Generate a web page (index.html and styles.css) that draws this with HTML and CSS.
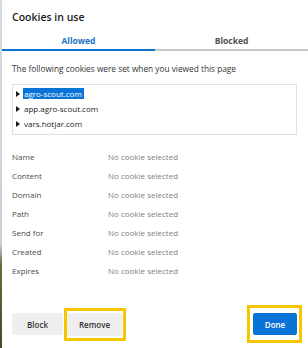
FILE: index.html
```html
<!DOCTYPE html>
<html lang="en">
<head>
    <meta charset="UTF-8">
    <meta name="viewport" content="width=device-width, initial-scale=1.0">
    <title>Cookies in use</title>
    <link rel="stylesheet" href="styles.css">
</head>
<body>

    <!-- cookie dialog -->
    <div class="dialog">

        <h1 class="title">Cookies in use</h1>

        <!-- tabs -->
        <div class="tabs">
            <div class="tab active">Allowed</div>
            <div class="tab">Blocked</div>
        </div>

        <p class="intro">The following cookies were set when you viewed this page</p>

        <!-- cookie tree -->
        <div class="tree">
            <div class="tree-item"><span class="arrow"></span><span class="site selected">agro-scout.com</span></div>
            <div class="tree-item"><span class="arrow"></span><span class="site">app.agro-scout.com</span></div>
            <div class="tree-item"><span class="arrow"></span><span class="site">vars.hotjar.com</span></div>
        </div>

        <!-- details -->
        <div class="details">
            <div class="row"><span class="label">Name</span><span class="value">No cookie selected</span></div>
            <div class="row"><span class="label">Content</span><span class="value">No cookie selected</span></div>
            <div class="row"><span class="label">Domain</span><span class="value">No cookie selected</span></div>
            <div class="row"><span class="label">Path</span><span class="value">No cookie selected</span></div>
            <div class="row"><span class="label">Send for</span><span class="value">No cookie selected</span></div>
            <div class="row"><span class="label">Created</span><span class="value">No cookie selected</span></div>
            <div class="row"><span class="label">Expires</span><span class="value">No cookie selected</span></div>
        </div>

        <!-- buttons -->
        <div class="footer">
            <button class="btn">Block</button>
            <span class="mark mark-remove"><button class="btn btn-remove">Remove</button></span>
            <span class="spacer"></span>
            <span class="mark mark-done"><button class="btn btn-primary">Done</button></span>
        </div>

    </div>

</body>
</html>
```

FILE: styles.css
```css
/* page */
body {
    margin: 0;
    width: 308px;
    height: 348px;
    overflow: hidden;
    font-family: 'Open Sans', 'Noto Sans', sans-serif;
    color: #333;
    background: linear-gradient(180deg, #d3dbe5 0%, #c9d0d8 70%, #6e6b3b 76%, #4a4726 100%);
}

/* dialog */
.dialog {
    margin-left: 2px;
    height: 348px;
    background-color: #ffffff;
    display: flex;
    flex-direction: column;
}

.title {
    margin: 0;
    padding: 10px 0 0 10px;
    font-size: 10.5px;
    line-height: 15px;
    font-weight: 600;
    color: #1b1b1b;
}

/* tabs */
.tabs {
    display: flex;
}

.tab {
    flex: 1;
    text-align: center;
    font-size: 8.5px;
    font-weight: 700;
    line-height: 14px;
    padding: 9px 0 1px;
    color: #505050;
    border-bottom: 2px solid #c8c8c8;
}

.tab.active {
    color: #1a73c8;
    border-bottom-color: #0f72cc;
}

.intro {
    margin: 12px 0 0 10px;
    font-size: 8.3px;
    line-height: 12px;
    color: #333;
}

/* tree */
.tree {
    margin: 9px 11px 0 10px;
    border: 1px solid #e1e1e1;
    padding: 1px 0 3px 3px;
}

.tree-item {
    display: flex;
    align-items: center;
    height: 15px;
    font-size: 8px;
    color: #222;
}

.arrow {
    width: 0;
    height: 0;
    border-top: 3px solid transparent;
    border-bottom: 3px solid transparent;
    border-left: 4px solid #1a1a1a;
    margin-right: 3px;
}

.site {
    line-height: 11px;
    padding: 0 2px 0 1px;
}

.site.selected {
    background-color: #0a74d6;
    color: #ffffff;
}

/* details */
.details {
    margin: 12px 0 0 10px;
}

.row {
    display: flex;
    height: 19px;
    align-items: center;
    font-size: 8px;
}

.label {
    width: 96px;
    color: #4a4a4a;
}

.value {
    color: #808080;
}

/* footer buttons */
.footer {
    display: flex;
    align-items: center;
    margin: 25px 6px 0 10px;
}

.spacer {
    flex: 1;
}

.btn {
    font-family: 'Open Sans', 'Noto Sans', sans-serif;
    font-size: 8px;
    font-weight: 600;
    color: #333;
    background-color: #efefef;
    border: none;
    border-radius: 2px;
    height: 22px;
    width: 51px;
    padding: 0;
    cursor: pointer;
}

.btn-remove {
    width: 55px;
    height: 23px;
}

.btn-primary {
    width: 44px;
    color: #fff;
    background-color: #0a74d6;
}

/* yellow highlight boxes */
.mark {
    display: flex;
    border: 3px solid #f7c600;
}

.mark-remove {
    margin-left: 1px;
    padding: 2px 1px 2px 0;
}

.mark-done {
    padding: 5px 2px 5px 3px;
}
```
